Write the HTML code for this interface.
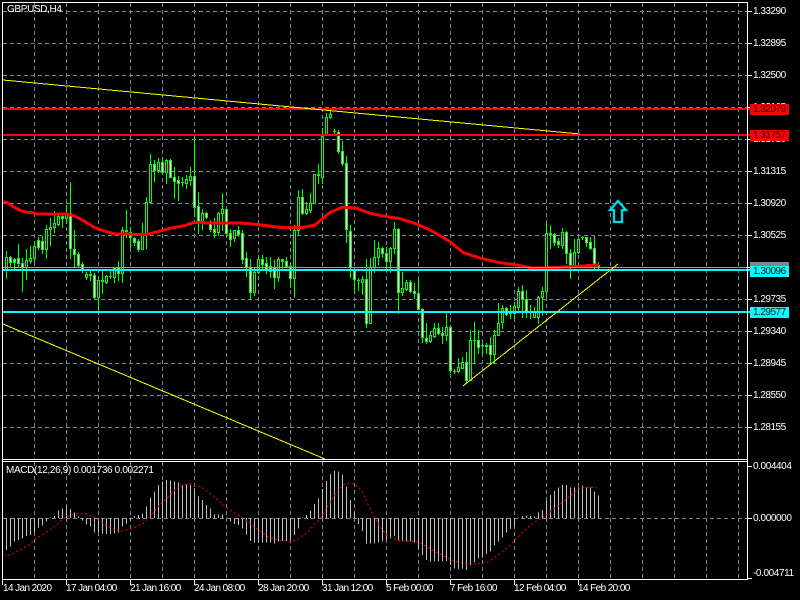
<!DOCTYPE html>
<html><head><meta charset="utf-8"><title>GBPUSD,H4</title>
<style>
html,body{margin:0;padding:0;background:#000;width:800px;height:600px;overflow:hidden}
#c{position:absolute;left:0;top:0}
.t{position:absolute;color:#fff;font:10px/11px "Liberation Sans",sans-serif;white-space:pre;letter-spacing:-.35px}
.b{position:absolute;left:750px;width:39px;height:11px}
.l{left:753px;letter-spacing:-.5px}
.x{letter-spacing:-.6px;top:583px}
.m{letter-spacing:-.4px;left:753px}
</style></head><body>
<svg id="c" width="800" height="600" viewBox="0 0 800 600" shape-rendering="crispEdges"></svg>
<div class="t l" style="top:6px">1.33290</div>
<div class="t l" style="top:38px">1.32895</div>
<div class="t l" style="top:70px">1.32500</div>
<div class="t l" style="top:102px">1.32105</div>
<div class="t l" style="top:134px">1.31710</div>
<div class="t l" style="top:166px">1.31315</div>
<div class="t l" style="top:198px">1.30920</div>
<div class="t l" style="top:230px">1.30525</div>
<div class="t l" style="top:262px">1.30130</div>
<div class="t l" style="top:294px">1.29735</div>
<div class="t l" style="top:326px">1.29340</div>
<div class="t l" style="top:358px">1.28945</div>
<div class="t l" style="top:390px">1.28550</div>
<div class="t l" style="top:422px">1.28155</div>
<div class="b" style="top:104px;background:#f00"></div><div class="t l" style="top:104px;color:#111">1.32079</div>
<div class="b" style="top:130px;background:#f00"></div><div class="t l" style="top:130px;color:#111">1.31757</div>
<div class="b" style="top:262px;background:#778899"></div>
<div class="b" style="top:266px;background:#0ff"></div><div class="t l" style="top:266px;color:#111">1.30096</div>
<div class="b" style="top:307px;background:#0ff"></div><div class="t l" style="top:307px;color:#111">1.29577</div>
<div class="t m" style="top:461px">0.004404</div>
<div class="t m" style="top:513px">0.000000</div>
<div class="t m" style="top:568px">-0.004711</div>
<div class="t" style="left:7px;top:4px">GBPUSD,H4</div>
<div class="t" style="left:6px;top:465px">MACD(12,26,9) 0.001736 0.002271</div>
<div class="t x" style="left:3px">14 Jan 2020</div>
<div class="t x" style="left:66px">17 Jan 04:00</div>
<div class="t x" style="left:130px">21 Jan 16:00</div>
<div class="t x" style="left:194px">24 Jan 08:00</div>
<div class="t x" style="left:258px">28 Jan 20:00</div>
<div class="t x" style="left:322px">31 Jan 12:00</div>
<div class="t x" style="left:386px">5 Feb 00:00</div>
<div class="t x" style="left:450px">7 Feb 16:00</div>
<div class="t x" style="left:514px">12 Feb 04:00</div>
<div class="t x" style="left:578px">14 Feb 20:00</div>
<script>
var A=[[362,445,380,418,0],[378,408,380,395,1],[383,413,387,395,1],[342,408,385,398,1],[385,482,398,410,1],[358,447,390,412,0],[348,400,385,392,0],[335,395,348,385,0],[322,358,330,350,1],[318,370,332,356,1],[285,383,298,356,0],[265,345,290,298,0],[243,305,280,290,0],[253,285,258,282,0],[250,290,258,265,1],[225,278,248,265,0],[155,383,248,355,1],[300,408,358,373,1],[365,408,373,404,1],[395,425,403,418,1],[425,447,432,442,0],[420,450,432,437,2],[430,505,435,502,1],[450,540,450,502,0],[420,488,450,456,2],[435,458,438,456,0],[420,445,437,440,2],[412,456,414,440,0],[393,450,412,430,1],[290,455,300,430,0],[240,320,300,305,2],[295,350,305,320,1],[320,345,325,335,1],[328,362,333,356,1],[280,356,310,356,0],[200,355,215,310,0],[72,215,103,215,0],[90,152,103,120,1],[85,125,97,120,0],[80,128,97,125,1],[88,158,90,125,0],[88,140,90,140,1],[112,205,140,152,1],[137,210,150,160,1],[140,168,155,160,2],[135,175,148,158,0],[110,165,138,150,0],[18,258,138,230,1],[185,310,228,278,1]];
var B=[[328,388,340,365,0],[335,355,340,350,1],[360,392,365,388,1],[355,410,388,395,1],[335,405,340,395,0],[280,390,328,340,0],[328,408,328,398,1],[388,437,398,418,1],[390,422,390,415,0],[377,408,390,402,1],[390,490,400,478,1],[457,527,475,502,1],[478,598,502,575,1],[500,585,517,575,0],[465,520,478,517,0],[465,505,478,492,1],[470,520,490,508,1],[470,530,498,512,1],[480,563,500,530,1],[472,543,478,530,0],[478,510,478,485,2],[472,500,484,497,1],[490,560,497,535,1],[375,590,390,535,0],[270,403,292,390,0],[268,342,292,340,1],[305,343,328,338,0],[280,335,308,330,0],[222,310,222,308,0],[192,250,222,228,2],[85,250,108,230,0],[40,105,50,102,0],[30,55,42,50,0],[88,103,94,96,2],[90,158,95,152,1],[123,195,152,188,1],[168,425,188,388,1],[375,530,392,500,1],[500,578,510,538,1],[535,570,540,544,2],[528,582,538,545,0],[477,680,538,668,1],[473,668,500,668,0],[420,515,472,500,0],[427,492,445,472,0],[440,470,445,460,1],[440,510,460,484,1],[440,515,445,484,0],[365,458,388,445,0],[385,640,388,575,1]];
var C=[[245,315,295,305,0],[270,300,277,297,0],[270,305,277,302,1],[278,325,302,310,1],[265,358,310,356,1],[355,455,356,440,1],[400,458,443,452,1],[425,455,435,452,0],[398,440,415,437,0],[398,432,415,428,1],[410,458,428,434,1],[370,450,412,434,0],[408,545,412,540,1],[538,550,542,545,2],[505,545,530,543,0],[500,535,517,533,0],[487,575,517,570,1],[420,570,450,570,0],[395,520,450,452,2],[420,490,450,470,1],[460,490,465,468,2],[458,490,465,470,2],[440,520,465,493,1],[420,520,435,493,0],[340,435,400,435,0],[345,415,355,397,0],[350,375,355,372,1],[345,385,365,372,2],[335,383,347,370,0],[290,365,304,350,0],[285,380,304,328,1],[300,380,328,363,1],[345,385,362,365,2],[350,382,365,380,0],[318,400,320,380,0],[290,375,304,320,0],[97,320,130,304,0],[105,175,130,134,2],[130,165,132,155,1],[145,170,152,162,1],[115,175,127,165,0],[122,220,127,190,1],[178,265,190,228,1],[148,228,187,225,0],[145,190,148,187,0],[138,148,141,144,2],[140,168,142,155,1],[140,178,155,175,1],[138,235,175,225,1],[215,235,225,228,1]];
var H=[285,275,260,255,250,243,240,232,218,212,200,188,183,167,160,152,162,172,185,197,208,215,232,233,237,237,237,235,233,215,205,195,183,180,175,155,128,110,90,80,75,76,80,83,90,88,90,100,125,135,150,160,178,178,178,187,200,207,210,220,238,258,262,262,262,263,263,265,260,258,258,255,240,220,188,180,168,147,130,102,78,57,48,50,60,95,135,170,207,228,265,265,265,262,260,255,250,243,255,258,260,260,262,285,300,315,320,320,320,320,318,330,340,342,340,345,330,322,310,308,297,290,272,260,247,232,222,215,188,183,182,183,185,172,165,137,120,108,98,90,90,98,98,98,92,97,97,110,122];
var S=[[10,300],[30,300],[50,290],[70,280],[90,268],[110,250],[130,238],[150,225],[170,210],[190,190],[210,182],[230,176],[260,176],[280,185],[300,197],[320,212],[340,222],[365,228],[390,222],[410,215],[430,205],[450,185],[470,160],[490,140],[510,120],[530,100],[550,90],[570,86],[590,90],[610,100],[630,115],[650,132],[670,150],[690,165],[710,178],[730,190],[750,205],[770,222],[790,235],[810,248],[830,255],[850,258],[870,258],[890,255],[905,243],[920,235],[940,212],[960,192],[980,160],[1000,125],[1020,100],[1035,86],[1055,85],[1075,95],[1090,115],[1105,150],[1120,180],[1140,215],[1160,240],[1180,252],[1200,257],[1230,258],[1250,260],[1270,268],[1300,287],[1330,302],[1360,318],[1390,325],[1410,330],[1445,325],[1470,318],[1500,296],[1530,270],[1550,250],[1570,230],[1590,212],[1610,197],[1630,187],[1650,170],[1670,155],[1690,140],[1720,115],[1740,100],[1760,97],[1790,98]];
var MA=[[8,215,130,0],[20,217,130,0],[40,230,130,0],[60,241,130,0],[80,247,130,0],[100,248,130,0],[110,252,130,0],[200,252,130,0],[225,258,130,0],[250,272,130,0],[285,293,130,0],[310,302,130,0],[345,312,130,0],[400,313,130,0],[440,313,130,0],[470,306,130,0],[510,295,130,0],[550,288,130,0],[580,278,130,0],[600,278,130,0],
[140,370,100,200],[200,377,100,200],[250,383,100,200],[305,383,100,200],[345,375,100,200],[390,337,100,200],[430,321,100,200],[470,325,100,200],[510,340,100,200],[550,348,100,200],[600,356,100,200],
[50,102,190,400],[100,125,190,400],[150,155,190,400],[190,188,190,400],[250,207,190,400],[300,218,190,400],[350,225,190,400],[400,235,190,400],[480,232,190,400],[550,228,190,400],[597,224,190,400]];
var o='',i;
function ln(x1,y1,x2,y2,c,w,d){return '<line x1="'+x1+'" y1="'+y1+'" x2="'+x2+'" y2="'+y2+'" stroke="'+c+'" stroke-width="'+(w||1)+'"'+(d?' stroke-dasharray="'+d+'"':'')+'/>';}
var G='#778899',W='#ffffff';
// grid
for(i=11;i<=427;i+=32)o+=ln(3,i+.5,747,i+.5,G,1,'4 3');
for(i=34;i<=738;i+=32){o+=ln(i+.5,3,i+.5,459,G,1,'4 3');o+=ln(i+.5,462,i+.5,579,G,1,'4 3');}
o+=ln(3,518.5,747,518.5,G,1,'4 3');
// macd bars
for(i=0;i<H.length;i++){var x=6+4*i+.5,y=455+H[i]/3;o+=ln(x,y,x,518,'#c0c0c0');}
// signal
var p=S.map(function(a){return (a[0]/3).toFixed(1)+','+(455+a[1]/3).toFixed(1)}).join(' ');
o+='<polyline points="'+p+'" fill="none" stroke="#f00" stroke-width="1" stroke-dasharray="2 2.5" shape-rendering="auto"/>';
// candles
function dc(a,y0,k){var x=6+4*k;
 var hi=Math.round(y0+a[0]/3),lo=Math.round(y0+a[1]/3),t=Math.round(y0+a[2]/3),b=Math.round(y0+a[3]/3);
 o+='<rect x="'+x+'" y="'+hi+'" width="1" height="'+(lo-hi+1)+'" fill="#0f0"/>';
 if(a[4]==2||b-t<1){o+='<rect x="'+(x-1)+'" y="'+t+'" width="3" height="'+Math.max(1,b-t)+'" fill="#0f0"/>';return;}
 o+='<rect x="'+(x-1)+'" y="'+t+'" width="3" height="'+(b-t+1)+'" fill="#0f0"/>';
 o+='<rect x="'+x+'" y="'+(t+1)+'" width="1" height="'+Math.max(0,b-t-1)+'" fill="'+(a[4]==1?'#fff':'#000')+'"/>';
}
for(i=0;i<A.length;i++)dc(A[i],130,i);
for(i=0;i<B.length;i++)dc(B[i],100,49+i);
for(i=0;i<C.length;i++)dc(C[i],190,99+i);
// MA
var m=MA.map(function(a){return (a[3]+a[0]/3).toFixed(1)+','+(a[2]+a[1]/3).toFixed(1)}).join(' ');
o+='<polyline points="'+m+'" fill="none" stroke="#f00" stroke-width="3"/>';
// horizontal lines
o+=ln(3,267.5,750,267.5,'#a0a0a0');
o+=ln(3,109,750,109,'#f00',2)+ln(3,135,750,135,'#f00',2)+ln(3,270,750,270,'#0ff',2)+ln(3,312,750,312,'#0ff',2);
// trend lines
o+=ln(3,80,580,134,'#ff0',1)+ln(3,324,325,459,'#ff0',1)+ln(463,386,618,264,'#ff0',1);
// arrow
o+='<polygon points="618,201 626,210 622,210 622,222 614,222 614,210 610,210" fill="none" stroke="#0090b0" stroke-width="2.6" shape-rendering="auto"/>';
o+='<polygon points="618,201 626,210 622,210 622,222 614,222 614,210 610,210" fill="none" stroke="#00ffff" stroke-width="1.2" shape-rendering="auto"/>';
// frame
o+=ln(2.5,2,2.5,579,W)+ln(747.5,2,747.5,579,W)+ln(2,2.5,748,2.5,W)+ln(2,459.5,748,459.5,W)+ln(2,461.5,748,461.5,W)+ln(2,579.5,748,579.5,W);
// y ticks
for(i=11;i<=427;i+=32)o+=ln(748,i+.5,752,i+.5,W);
o+=ln(748,466.5,752,466.5,W)+ln(748,518.5,752,518.5,W)+ln(748,578.5,752,578.5,W);
// x ticks
o+=ln(2.5,580,2.5,585,W);
for(i=66;i<=578;i+=64)o+=ln(i+.5,580,i+.5,585,W);
document.getElementById('c').innerHTML=o;
</script>
</body></html>
